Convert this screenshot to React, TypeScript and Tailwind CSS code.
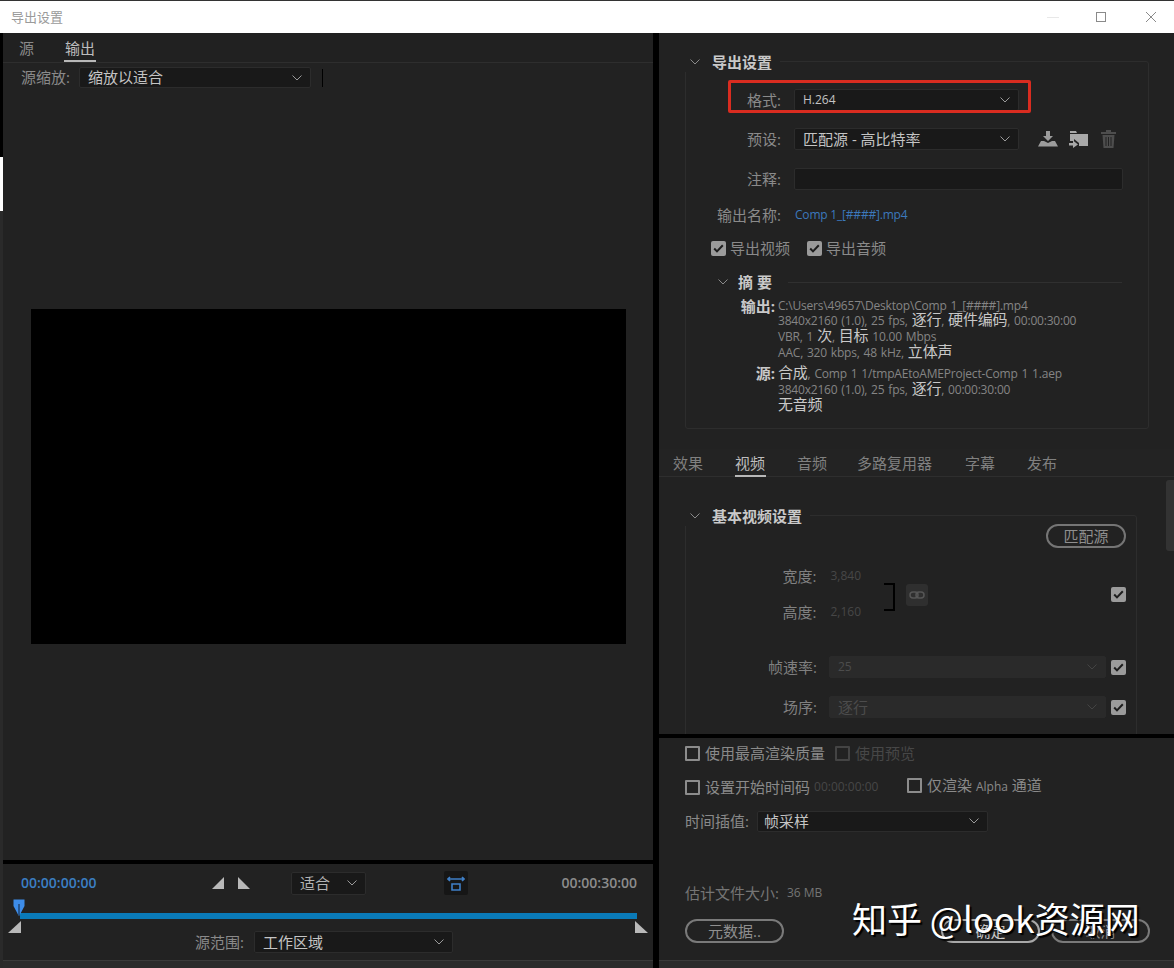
import React from "react";

const font = { fontFamily: '"Open Sans","Noto Sans CJK SC",sans-serif' };

function Chevron({ className = "" }: { className?: string }) {
  return (
    <svg width="10" height="6" viewBox="0 0 10 6" className={className} fill="none" stroke="currentColor" strokeWidth="1">
      <path d="M0.5 0.5 L5 5 L9.5 0.5" />
    </svg>
  );
}

function Select({ text, className = "", textClass = "text-[15px]", dim = false }: { text: string; className?: string; textClass?: string; dim?: boolean }) {
  return (
    <div className={`flex items-center justify-between rounded-[2px] border pl-2 pr-2 ${dim ? "bg-[#2a2a2a] border-[#2a2a2a] text-[#4c4c4c]" : "bg-[#191919] border-[#2c2c2c] text-[#c4c4c4]"} ${className}`}>
      <span className={`${textClass} leading-none whitespace-nowrap`}>{text}</span>
      <Chevron className={dim ? "text-[#444444]" : "text-[#9a9a9a]"} />
    </div>
  );
}

function Check({ checked = true, dim = false }: { checked?: boolean; dim?: boolean }) {
  if (!checked)
    return <span className={`block w-[15px] h-[15px] shrink-0 rounded-[1px] border-2 ${dim ? "border-[#444444]" : "border-[#8c8c8c]"}`} />;
  return (
    <span className="flex items-center justify-center w-[15px] h-[15px] shrink-0 rounded-[2px] bg-[#9b9b9b]">
      <svg width="11" height="9" viewBox="0 0 11 9" fill="none" stroke="#1d1d1d" strokeWidth="2">
        <path d="M1.2 4.5 L4 7.4 L9.8 1.2" />
      </svg>
    </span>
  );
}

function Pill({ text, className = "" }: { text: string; className?: string }) {
  return (
    <div className={`flex items-center justify-center h-[24px] rounded-full border-2 border-[#7a7a7a] text-[15px] text-[#8f8f8f] leading-none ${className}`}>
      {text}
    </div>
  );
}

function FormRow({ label, children, className = "" }: { label: string; children?: React.ReactNode; className?: string }) {
  return (
    <div className={`flex items-center ${className}`}>
      <span className="w-[95px] shrink-0 text-right text-[15px] leading-none text-[#8a8a8a] whitespace-nowrap">{label}</span>
      <div className="ml-[13px] flex items-center">{children}</div>
    </div>
  );
}

function SummaryLine({ children, className = "" }: { children: React.ReactNode; className?: string }) {
  return <div className={`h-[16px] leading-[16px] text-[12px] text-[#858585] whitespace-nowrap tracking-[-0.2px] [word-spacing:1px] ${className}`}>{children}</div>;
}
function Cn({ children }: { children: React.ReactNode }) {
  return <span className="text-[15px] leading-none text-[#c8c8c8]">{children}</span>;
}

export default function App() {
  return (
    <div className="relative flex flex-col w-[1174px] h-screen overflow-hidden bg-[#1a1a1a]" style={font}>
      {/* title bar */}
      <div className="flex items-center shrink-0 h-[33px] bg-white border-t border-[#333333] pl-[11px]">
        <span className="text-[13px] leading-none text-[#9a9a9a]">导出设置</span>
        <div className="ml-auto flex items-center">
          <span className="block w-[12px] h-px bg-[#e8e8e8] mr-[37px]" />
          <span className="block w-[10px] h-[10px] border border-[#8a8a8a] mr-[39px]" />
          <svg width="12" height="12" viewBox="0 0 12 12" className="mr-[17px]" stroke="#8a8a8a" strokeWidth="1">
            <path d="M1 1 L11 11 M11 1 L1 11" />
          </svg>
        </div>
      </div>

      {/* main */}
      <div className="flex h-[935px] shrink-0 bg-black">
        {/* left edge sliver */}
        <div className="flex flex-col w-[3px] shrink-0 bg-[#2a2a2a]">
          <div className="h-[124px] bg-black" />
          <div className="h-[54px] bg-white" />
        </div>

        {/* left column */}
        <div className="flex flex-col w-[650px] shrink-0">
          <div className="flex flex-col flex-1 bg-[#222222] min-h-0">
            <div className="flex h-[30px] shrink-0 border-b border-[#2e2e2e] bg-[#212121] pl-[16px] text-[15px] leading-none">
              <span className="pt-[8px] text-[#8a8a8a]">源</span>
              <span className="ml-[30px] pt-[8px] h-[29px] px-[1px] text-[#bdbdbd] border-b-2 border-[#b8b8b8]">输出</span>
            </div>
            <div className="flex items-center h-[29px] shrink-0 pl-[18px]">
              <span className="text-[15px] leading-none text-[#8a8a8a] whitespace-nowrap">源缩放:</span>
              <Select text="缩放以适合" className="ml-[9px] w-[232px] h-[21px]" />
              <span className="block ml-[11px] w-px h-[18px] bg-black" />
            </div>
            <div className="flex flex-1 items-center justify-center pt-[1px]">
              <div className="w-[595px] h-[335px] bg-black" />
            </div>
          </div>

          {/* timeline */}
          <div className="relative mt-[4px] h-[97px] shrink-0 bg-[#222222] border-b border-[#3a3a3a]">
            <div className="flex items-center h-[38px] pl-[18px] pr-[16px]">
              <span className="w-[191px] text-[14px] font-semibold text-[#3b7fc4] leading-none">00:00:00:00</span>
              <svg width="12" height="12" viewBox="0 0 12 12"><path d="M12 0 V12 H0 Z" fill="#b9b9b9" /></svg>
              <svg width="12" height="12" viewBox="0 0 12 12" className="ml-[14px]"><path d="M0 0 V12 H12 Z" fill="#b9b9b9" /></svg>
              <Select text="适合" className="ml-[41px] w-[75px] h-[23px] !text-[#b4b4b4]" />
              <div className="ml-[78px] flex items-center justify-center w-[24px] h-[24px] bg-[#161616] rounded-[2px]">
                <svg width="18" height="16" viewBox="0 0 18 16" fill="none" stroke="#3f7fc6" strokeWidth="1.6">
                  <path d="M1 4 H17 M3 2 L1 4 L3 6 M15 2 L17 4 L15 6 M5 9 H13 V15 H5 Z" />
                </svg>
              </div>
              <span className="ml-auto text-[14px] font-semibold text-[#8c8c8c] leading-none">00:00:30:00</span>
            </div>
            <div className="ml-[17px] mr-[16px] mt-[11px] h-[6px] bg-[#0a7ab8]" />
            <svg width="12" height="17" viewBox="0 0 12 17" className="absolute left-[10px] top-[35px]">
              <path d="M0.5 0.5 H11.5 V7 L6.5 16.5 H5.5 L0.5 7 Z" fill="#3d8ce8" />
              <path d="M6 5 V16" stroke="#10233a" strokeWidth="1" />
            </svg>
            <svg width="13" height="12" viewBox="0 0 13 12" className="absolute left-[5px] top-[57px]"><path d="M13 0 V12 H0 Z" fill="#b9b9b9" /></svg>
            <svg width="13" height="12" viewBox="0 0 13 12" className="absolute left-[632px] top-[57px]"><path d="M0 0 V12 H13 Z" fill="#b9b9b9" /></svg>
            <div className="flex items-center justify-start mt-[12px] pl-[192px]">
              <span className="text-[15px] leading-none text-[#8a8a8a] whitespace-nowrap">源范围:</span>
              <Select text="工作区域" className="ml-[10px] w-[199px] h-[22px]" />
            </div>
          </div>
          <div className="h-[7px] shrink-0 bg-[#2b2b2b]" />
        </div>

        {/* right column */}
        <div className="flex flex-col ml-[6px] w-[515px] shrink-0">
          <div className="relative flex flex-col h-[701px] shrink-0 bg-[#222222]">
            {/* export settings */}
            <div className="mx-[26px] mt-[28px] w-[464px] h-[368px] shrink-0 rounded-[3px] border border-[#2d2d2d]">
              <div className="flex items-center -mt-[10px] h-[20px] w-fit bg-[#222222] -ml-[1px] pr-[8px]">
                <Chevron className="ml-[5px] text-[#8a8a8a]" />
                <span className="ml-[12px] text-[15px] font-bold leading-none text-[#c9c9c9]">导出设置</span>
              </div>
              <FormRow label="格式:" className="mt-[17px] h-[22px]">
                <Select text="H.264" className="w-[225px] h-[22px]" textClass="text-[12px]" />
              </FormRow>
              <FormRow label="预设:" className="mt-[17px] h-[22px]">
                <Select text="匹配源 - 高比特率" className="w-[225px] h-[22px]" />
                <svg width="20" height="16" viewBox="0 0 20 16" className="ml-[19px]" fill="#9c9c9c">
                  <path d="M8 0 H12 V5 H15 L10 10 L5 5 H8 Z M0 15.5 L3 10 H6 L10 12 L14 10 H17 L20 15.5 Z" />
                </svg>
                <svg width="19" height="17" viewBox="0 0 19 17" className="ml-[11px]" fill="#a8a8a8">
                  <path d="M1 0 H7 L8 2 H1 Z M1 3 H19 V15 H10 V12 L5 8 V10 H1 Z" />
                  <path d="M0 12 H4 V9.5 L9 13.5 L4 17 V14.5 H0 Z" />
                </svg>
                <svg width="15" height="18" viewBox="0 0 15 18" className="ml-[13px]" fill="#4d4d4d">
                  <path d="M0 2 H5 V0 H10 V2 H15 V4 H0 Z M1.5 5 H13.5 L12.5 18 H2.5 Z" />
                  <path d="M5 7 V16 M7.5 7 V16 M10 7 V16" stroke="#222222" strokeWidth="1" />
                </svg>
              </FormRow>
              <FormRow label="注释:" className="mt-[18px] h-[22px]">
                <div className="w-[329px] h-[22px] rounded-[2px] border border-[#2c2c2c] bg-[#191919]" />
              </FormRow>
              <FormRow label="输出名称:" className="mt-[14px] h-[22px]">
                <span className="pl-[1px] text-[12px] leading-none tracking-[-0.2px] text-[#3c79bd] whitespace-nowrap">Comp 1_[####].mp4</span>
              </FormRow>
              <div className="flex items-center mt-[11px] ml-[25px] h-[22px] text-[15px] leading-none text-[#8a8a8a]">
                <Check />
                <span className="ml-[4px] whitespace-nowrap">导出视频</span>
                <span className="ml-[17px]"><Check /></span>
                <span className="ml-[4px] whitespace-nowrap">导出音频</span>
              </div>
              {/* summary */}
              <div className="flex items-center mt-[13px] ml-[32px] h-[20px]">
                <Chevron className="text-[#8a8a8a]" />
                <span className="ml-[10px] text-[15px] font-bold leading-none text-[#c9c9c9] whitespace-nowrap">摘 要</span>
                <div className="ml-[16px] w-[334px] h-px bg-[#303030]" />
              </div>
              <div className="flex mt-[6px]">
                <div className="w-[89px] shrink-0 text-right text-[15px] font-bold leading-[16px] text-[#c9c9c9]">输出:</div>
                <div className="ml-[3px]">
                  <SummaryLine>C:\Users\49657\Desktop\Comp 1_[####].mp4</SummaryLine>
                  <SummaryLine className="-mt-[2px]">3840x2160 (1.0), 25 fps, <Cn>逐行</Cn>, <Cn>硬件编码</Cn>, 00:00:30:00</SummaryLine>
                  <SummaryLine>VBR, 1 <Cn>次</Cn>, <Cn>目标</Cn> 10.00 Mbps</SummaryLine>
                  <SummaryLine>AAC, 320 kbps, 48 kHz, <Cn>立体声</Cn></SummaryLine>
                </div>
              </div>
              <div className="flex mt-[5px]">
                <div className="w-[89px] shrink-0 text-right text-[15px] font-bold leading-[16px] text-[#c9c9c9]">源:</div>
                <div className="ml-[3px]">
                  <SummaryLine><Cn>合成</Cn>, Comp 1 1/tmpAEtoAMEProject-Comp 1 1.aep</SummaryLine>
                  <SummaryLine>3840x2160 (1.0), 25 fps, <Cn>逐行</Cn>, 00:00:30:00</SummaryLine>
                  <SummaryLine><Cn>无音频</Cn></SummaryLine>
                </div>
              </div>
            </div>

            {/* tabs */}
            <div className="flex mt-[20px] h-[28px] shrink-0 border-b border-[#2e2e2e] bg-[#232323] pl-[14px] text-[15px] leading-none text-[#808080] whitespace-nowrap">
              <span className="pt-[7px] w-[62px]">效果</span>
              <span className="pt-[7px] w-[62px]"><span className="block w-[31px] h-[21px] text-[#bdbdbd] border-b-2 border-[#b8b8b8]">视频</span></span>
              <span className="pt-[7px] w-[60px]">音频</span>
              <span className="pt-[7px] w-[108px]">多路复用器</span>
              <span className="pt-[7px] w-[62px]">字幕</span>
              <span className="pt-[7px]">发布</span>
            </div>

            {/* video settings */}
            <div className="flex flex-1 min-h-0 overflow-hidden">
              <div className="flex-1 min-w-0 pt-[38px] pl-[26px]">
                <div className="w-[452px] h-[300px] rounded-[3px] border border-[#2d2d2d]">
                  <div className="flex items-center -mt-[10px] h-[20px] w-fit bg-[#222222] -ml-[1px] pr-[8px]">
                    <Chevron className="ml-[5px] text-[#8a8a8a]" />
                    <span className="ml-[12px] text-[15px] font-bold leading-none text-[#c9c9c9] whitespace-nowrap">基本视频设置</span>
                  </div>
                  <div className="flex justify-end pr-[10px] -mt-[2px]">
                    <Pill text="匹配源" className="w-[80px] !border-[#757575]" />
                  </div>
                  <div className="flex items-center mt-[20px]">
                    <div className="flex flex-col gap-[20px] w-[175px]">
                      <div className="flex items-center h-[16px]">
                        <span className="w-[131px] text-right text-[15px] leading-none text-[#808080]">宽度:</span>
                        <span className="ml-[14px] text-[12px] leading-none text-[#474747]">3,840</span>
                      </div>
                      <div className="flex items-center h-[16px]">
                        <span className="w-[131px] text-right text-[15px] leading-none text-[#808080]">高度:</span>
                        <span className="ml-[14px] text-[12px] leading-none text-[#474747]">2,160</span>
                      </div>
                    </div>
                    <span className="block ml-[23px] mt-[6px] w-[11px] h-[28px] border-y-2 border-r-2 border-black" />
                    <div className="ml-[11px] mt-[2px] flex items-center justify-center w-[22px] h-[22px] rounded-[3px] bg-[#2f2f2f]">
                      <svg width="16" height="8" viewBox="0 0 16 8" fill="none" stroke="#565656" strokeWidth="1.5">
                        <rect x="1" y="1" width="8" height="6" rx="3" />
                        <rect x="7" y="1" width="8" height="6" rx="3" />
                      </svg>
                    </div>
                    <span className="ml-auto mr-[10px]"><Check /></span>
                  </div>
                  <div className="flex items-center mt-[36px] h-[22px]">
                    <span className="w-[131px] text-right text-[15px] leading-none text-[#808080]">帧速率:</span>
                    <Select dim text="25" textClass="text-[12px]" className="ml-[12px] w-[277px] h-[22px]" />
                    <span className="ml-[5px]"><Check /></span>
                  </div>
                  <div className="flex items-center mt-[18px] h-[22px]">
                    <span className="w-[131px] text-right text-[15px] leading-none text-[#808080]">场序:</span>
                    <Select dim text="逐行" className="ml-[12px] w-[277px] h-[22px]" />
                    <span className="ml-[5px]"><Check /></span>
                  </div>
                </div>
              </div>
              <div className="w-[8px] shrink-0 mr-0 -ml-[8px] pt-[3px]">
                <div className="h-[71px] w-[8px] rounded-l-[3px] bg-[#333333]" />
              </div>
            </div>
          </div>

          {/* bottom options */}
          <div className="mt-[4px] h-[223px] shrink-0 bg-[#222222] border-b border-[#3a3a3a] pl-[26px]">
            <div className="flex items-center pt-[7px] h-[24px] text-[15px] leading-none whitespace-nowrap">
              <Check checked={false} />
              <span className="ml-[5px] text-[#8a8a8a]">使用最高渲染质量</span>
              <span className="ml-[10px]"><Check checked={false} dim /></span>
              <span className="ml-[5px] text-[#474747]">使用预览</span>
            </div>
            <div className="flex items-center mt-[13px] h-[24px] text-[15px] leading-none whitespace-nowrap">
              <Check checked={false} />
              <span className="ml-[5px] text-[#8a8a8a]">设置开始时间码</span>
              <span className="ml-[4px] w-[93px] text-[12px] text-[#474747]">00:00:00:00</span>
              <span className="-mt-[4px]"><Check checked={false} /></span>
              <span className="-mt-[4px] ml-[5px] text-[#8a8a8a]">仅渲染 <span className="text-[12px]">Alpha</span> 通道</span>
            </div>
            <div className="flex items-center mt-[10px] h-[24px] text-[15px] leading-none whitespace-nowrap">
              <span className="text-[#8a8a8a]">时间插值:</span>
              <Select text="帧采样" className="ml-[8px] w-[231px] h-[21px] !pl-[6px]" />
            </div>
            <div className="flex items-center mt-[50px] h-[20px] text-[15px] leading-none whitespace-nowrap text-[#757575]">
              估计文件大小:<span className="ml-[8px] text-[12px]">36 MB</span>
            </div>
            <div className="flex mt-[16px]">
              <Pill text="元数据.." className="w-[99px]" />
              <Pill text="确定" className="ml-[157px] w-[99px] !border-[#a8a8a8] !text-[#c9c9c9]" />
              <Pill text="取消" className="ml-[11px] w-[99px]" />
            </div>
          </div>
          <div className="h-[7px] shrink-0 bg-[#2b2b2b]" />
        </div>
      </div>

      {/* red highlight */}
      <div className="absolute left-[728px] top-[80px] w-[303px] h-[33px] rounded-[2px] border-[3px] border-[#d92c20]" />

      {/* watermark */}
      <div className="absolute left-[852px] top-[896px] text-[35px] leading-[44px] text-white whitespace-nowrap [text-shadow:2px_2px_1px_#000]" style={{ fontFamily: '"Noto Sans CJK SC",sans-serif' }}>
        知乎 @look资源网
      </div>
    </div>
  );
}
